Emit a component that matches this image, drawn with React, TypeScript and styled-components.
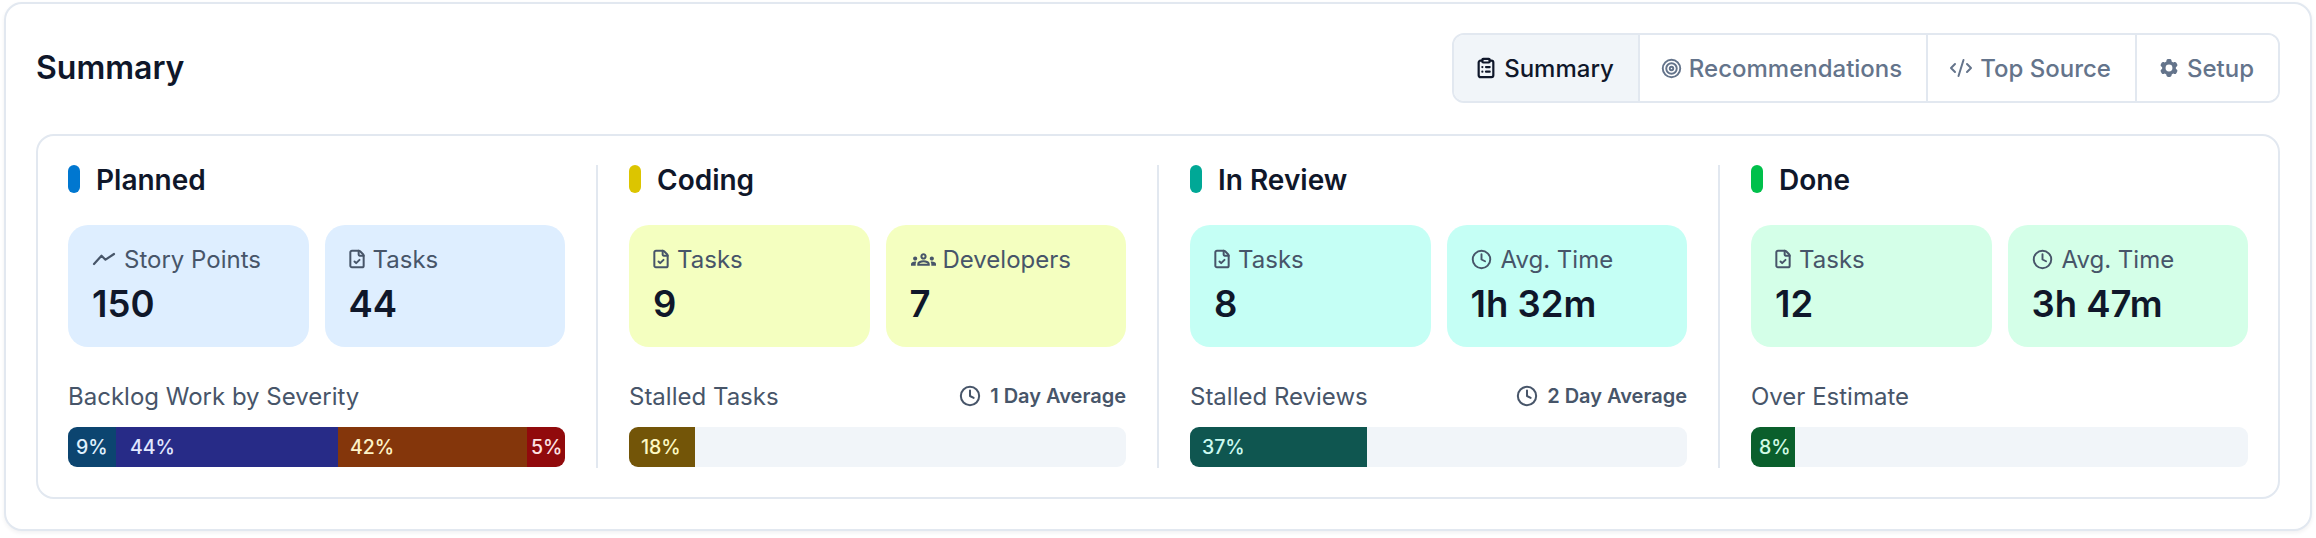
import { ReactNode } from "react"
import styled, { createGlobalStyle } from "styled-components"
import { ClipboardList, Clock, CodeXml, FileCheck, Target } from "lucide-react"
import { HiCog6Tooth } from "react-icons/hi2"
import { MdOutlineGroups } from "react-icons/md"

const GlobalStyle = createGlobalStyle`
  html, body {
    margin: 0;
    background: #fff;
  }
  * {
    box-sizing: border-box;
  }
`

const Page = styled.div`
  width: 2316px;
  height: 538px;
  padding: 2px 4px 7px 4px;
  font-family: Inter, "Liberation Sans", sans-serif;
  color: #0f172a;
`

const Card = styled.section`
  height: 100%;
  padding: 29px 30px 30px 30px;
  background: #fff;
  border: 2px solid #e2e8f0;
  border-radius: 18px;
  box-shadow: 0 2px 4px rgba(15, 23, 42, 0.06);
`

const Header = styled.header`
  display: flex;
  align-items: center;
  justify-content: space-between;
  height: 70px;
  margin-bottom: 31px;
`

const Title = styled.h2`
  margin: 0;
  font-size: 32px;
  font-weight: 600;
  line-height: 1;
`

const Tabs = styled.nav`
  display: flex;
  height: 70px;
  border: 2px solid #e2e8f0;
  border-radius: 12px;
  overflow: hidden;
`

const Tab = styled.div<{ $active?: boolean }>`
  display: flex;
  align-items: center;
  gap: 7px;
  padding: 0 24px 0 21px;
  font-size: 24px;
  font-weight: 500;
  color: ${(p) => (p.$active ? "#0f172a" : "#64748b")};
  background: ${(p) => (p.$active ? "#f1f5f9" : "#fff")};
  border-left: 2px solid #e2e8f0;

  &:first-child {
    border-left: none;
  }
`

const Board = styled.div`
  display: grid;
  grid-template-columns: repeat(4, 497px);
  column-gap: 64px;
  height: 365px;
  padding: 29px 30px;
  border: 2px solid #e2e8f0;
  border-radius: 18px;
`

const Column = styled.div`
  position: relative;
  display: flex;
  flex-direction: column;

  & + &::before {
    content: "";
    position: absolute;
    top: 0;
    bottom: 0;
    left: -33px;
    width: 2px;
    background: #e2e8f0;
  }
`

const ColumnHead = styled.div`
  display: flex;
  align-items: center;
  gap: 16px;
  height: 28px;
  margin-bottom: 32px;
`

const Dot = styled.span<{ $color: string }>`
  width: 12px;
  height: 28px;
  border-radius: 6px;
  background: ${(p) => p.$color};
`

const ColumnName = styled.h3`
  margin: 0;
  padding-top: 2px;
  font-size: 28px;
  font-weight: 600;
  line-height: 1;
`

const Stats = styled.div`
  display: grid;
  grid-template-columns: 1fr 1fr;
  gap: 16px;
  margin-bottom: 34px;
`

const Stat = styled.div<{ $bg: string }>`
  height: 122px;
  padding: 19px 24px;
  border-radius: 20px;
  background: ${(p) => p.$bg};
`

const StatLabel = styled.div`
  display: flex;
  align-items: center;
  gap: 6px;
  height: 30px;
  font-size: 24px;
  color: #475569;
  margin-bottom: 8px;
`

const StatIcon = styled.span<{ $width: number; $offset?: number }>`
  display: flex;
  align-items: center;
  width: ${(p) => p.$width}px;
  margin-left: ${(p) => p.$offset ?? 0}px;
`

const StatValue = styled.div`
  font-size: 36.5px;
  font-weight: 600;
  line-height: 44px;
`

const MetricHead = styled.div`
  display: flex;
  align-items: center;
  justify-content: space-between;
  height: 30px;
  margin-bottom: 16px;
`

const MetricLabel = styled.span`
  font-size: 24px;
  color: #475569;
`

const Average = styled.span`
  display: flex;
  align-items: center;
  gap: 9px;
  font-size: 20px;
  font-weight: 600;
  color: #475569;
`

const Bar = styled.div`
  display: flex;
  height: 40px;
  border-radius: 9px;
  overflow: hidden;
  background: #f1f5f9;
`

const Segment = styled.div<{ $bg: string; $fg: string; $pad: number }>`
  display: flex;
  align-items: center;
  padding-left: ${(p) => p.$pad}px;
  font-size: 19.5px;
  font-weight: 500;
  background: ${(p) => p.$bg};
  color: ${(p) => p.$fg};
`

// zigzag line, the trending icons in the packages all carry an arrow head
const TrendLine = () => (
  <svg width="24" height="24" viewBox="0 0 24 24" fill="none" stroke="currentColor" strokeWidth="2.2" strokeLinecap="round" strokeLinejoin="round">
    <polyline points="2 17 9.5 8.7 13.5 12.7 22 7" />
  </svg>
)

type Seg = { label: string; width: number; bg: string; fg: string; pad: number }

type ColumnData = {
  name: string
  dot: string
  tint: string
  stats: { icon: ReactNode; label: string; value: string }[]
  metric: string
  average?: string
  segments: Seg[]
}

const tasksIcon = (
  <StatIcon $width={20} $offset={-2}>
    <FileCheck size={20} strokeWidth={2.4} />
  </StatIcon>
)

const timeIcon = (
  <StatIcon $width={24}>
    <Clock size={21} strokeWidth={2.2} />
  </StatIcon>
)

const columns: ColumnData[] = [
  {
    name: "Planned",
    dot: "#0077d0",
    tint: "#deeeff",
    stats: [
      {
        icon: (
          <StatIcon $width={26}>
            <TrendLine />
          </StatIcon>
        ),
        label: "Story Points",
        value: "150",
      },
      { icon: tasksIcon, label: "Tasks", value: "44" },
    ],
    metric: "Backlog Work by Severity",
    segments: [
      { label: "9%", width: 48, bg: "#0c4570", fg: "#e0f2fe", pad: 8 },
      { label: "44%", width: 222, bg: "#272b87", fg: "#e0e7ff", pad: 14 },
      { label: "42%", width: 189, bg: "#84360b", fg: "#fef3c7", pad: 12 },
      { label: "5%", width: 38, bg: "#910a0c", fg: "#fee2e2", pad: 4 },
    ],
  },
  {
    name: "Coding",
    dot: "#dcc500",
    tint: "#f4ffc0",
    stats: [
      { icon: tasksIcon, label: "Tasks", value: "9" },
      {
        icon: (
          <StatIcon $width={26} $offset={1}>
            <MdOutlineGroups size={25} />
          </StatIcon>
        ),
        label: "Developers",
        value: "7",
      },
    ],
    metric: "Stalled Tasks",
    average: "1 Day Average",
    segments: [{ label: "18%", width: 66, bg: "#735508", fg: "#fef9c3", pad: 12 }],
  },
  {
    name: "In Review",
    dot: "#00a896",
    tint: "#c5fff5",
    stats: [
      { icon: tasksIcon, label: "Tasks", value: "8" },
      { icon: timeIcon, label: "Avg. Time", value: "1h 32m" },
    ],
    metric: "Stalled Reviews",
    average: "2 Day Average",
    segments: [{ label: "37%", width: 177, bg: "#0f5650", fg: "#ccfbf1", pad: 12 }],
  },
  {
    name: "Done",
    dot: "#00c04b",
    tint: "#d4ffe8",
    stats: [
      { icon: tasksIcon, label: "Tasks", value: "12" },
      { icon: timeIcon, label: "Avg. Time", value: "3h 47m" },
    ],
    metric: "Over Estimate",
    segments: [{ label: "8%", width: 44, bg: "#0a5f2c", fg: "#d1fae5", pad: 8 }],
  },
]

export default function App() {
  return (
    <Page>
      <GlobalStyle />
      <Card>
        <Header>
          <Title>Summary</Title>
          <Tabs>
            <Tab $active>
              <ClipboardList size={22} strokeWidth={2.4} />
              Summary
            </Tab>
            <Tab>
              <Target size={21} strokeWidth={2.2} />
              Recommendations
            </Tab>
            <Tab>
              <CodeXml size={24} />
              Top Source
            </Tab>
            <Tab>
              <HiCog6Tooth size={22} />
              Setup
            </Tab>
          </Tabs>
        </Header>
        <Board>
          {columns.map((col) => (
            <Column key={col.name}>
              <ColumnHead>
                <Dot $color={col.dot} />
                <ColumnName>{col.name}</ColumnName>
              </ColumnHead>
              <Stats>
                {col.stats.map((s) => (
                  <Stat key={s.label} $bg={col.tint}>
                    <StatLabel>
                      {s.icon}
                      {s.label}
                    </StatLabel>
                    <StatValue>{s.value}</StatValue>
                  </Stat>
                ))}
              </Stats>
              <MetricHead>
                <MetricLabel>{col.metric}</MetricLabel>
                {col.average && (
                  <Average>
                    <Clock size={22} strokeWidth={2.2} />
                    {col.average}
                  </Average>
                )}
              </MetricHead>
              <Bar>
                {col.segments.map((seg) => (
                  <Segment key={seg.label} $bg={seg.bg} $fg={seg.fg} $pad={seg.pad} style={{ width: seg.width }}>
                    {seg.label}
                  </Segment>
                ))}
              </Bar>
            </Column>
          ))}
        </Board>
      </Card>
    </Page>
  )
}
